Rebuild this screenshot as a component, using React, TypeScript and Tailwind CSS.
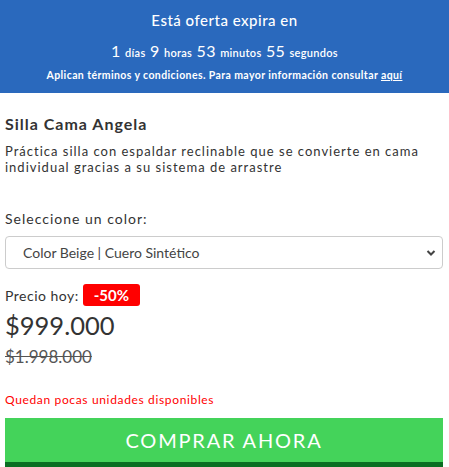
export default function App() {
  return (
    <div className="w-[449px] min-h-[467px] bg-white font-['Lato',sans-serif] overflow-hidden">
      <div className="h-[93px] bg-[#2a69bd] text-white text-center flex flex-col items-center pt-[10px]">
        <p className="text-[15px] font-medium tracking-[0.5px] leading-[20px]">Está oferta expira en</p>
        <p className="mt-[10px] leading-[22px] tracking-[0.3px]">
          <span className="text-[16px]">1</span> <span className="text-[11px] font-semibold">días</span>{" "}
          <span className="text-[16px]">9</span> <span className="text-[11px] font-semibold">horas</span>{" "}
          <span className="text-[16px]">53</span> <span className="text-[11px] font-semibold">minutos</span>{" "}
          <span className="text-[16px]">55</span> <span className="text-[11px] font-semibold">segundos</span>
        </p>
        <p className="mt-[3px] text-[10.5px] font-bold tracking-[0.4px] leading-[16px]">
          Aplican términos y condiciones. Para mayor información consultar <span className="underline">aquí</span>
        </p>
      </div>

      <div className="px-[5px]">
        <h1 className="mt-[20px] text-[16px] font-bold text-[#333] tracking-[1px] leading-[22px]">Silla Cama Angela</h1>
        <p className="mt-[8px] text-[13px] text-[#333] tracking-[1px] leading-[16px]">
          Práctica silla con espaldar reclinable que se convierte en cama individual gracias a su sistema de arrastre
        </p>

        <p className="mt-[35px] text-[14px] text-[#333] tracking-[1px] leading-[18px]">Seleccione un color:</p>
        <div className="mt-[8px] h-[33px] w-[438px] border border-[#ccc] rounded-[4px] flex items-center justify-between pl-[17px] pr-[6px]">
          <span className="text-[14px] text-[#444]">Color Beige | Cuero Sintético</span>
          <svg width="10" height="8" viewBox="0 0 10 8" className="text-[#444]">
            <path d="M1.5 2 L5 5.5 L8.5 2" fill="none" stroke="currentColor" strokeWidth="2" />
          </svg>
        </div>

        <div className="mt-[15px] flex items-center gap-[4px]">
          <span className="text-[14px] text-[#333] tracking-[0.5px]">Precio hoy:</span>
          <span className="bg-[#ff0000] text-white text-[15px] font-bold rounded-[3px] h-[22px] w-[57px] flex items-center justify-center">-50%</span>
        </div>
        <p className="mt-[3px] text-[25.5px] text-[#333] leading-[32px]">$999.000</p>
        <p className="mt-[5px] text-[17px] text-[#555] line-through leading-[22px]">$1.998.000</p>

        <p className="mt-[24px] text-[12px] text-[#ff0000] tracking-[0.65px] leading-[16px]">Quedan pocas unidades disponibles</p>
        <button className="mt-[10px] w-[438px] h-[49px] bg-[#44d35a] border-b-[5px] border-[#0a6e22] text-white text-[20px] tracking-[1.8px]">
          COMPRAR AHORA
        </button>
      </div>
    </div>
  );
}
